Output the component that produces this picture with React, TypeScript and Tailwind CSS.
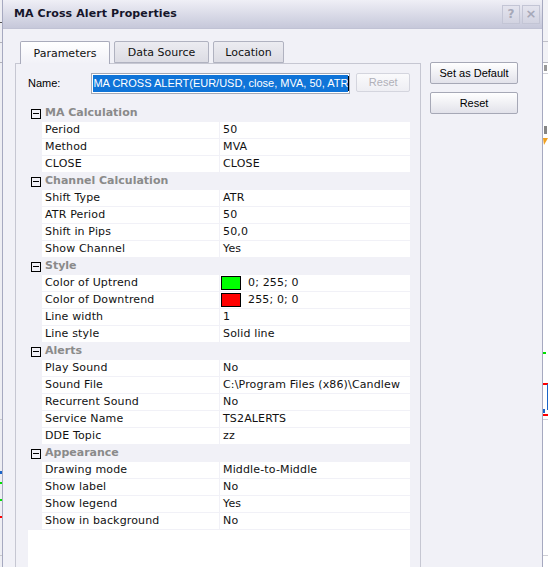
import React from 'react';

type Row = { label: string; value: string; swatch?: string };
type Group = { title: string; rows: Row[] };

const groups: Group[] = [
  {
    title: 'MA Calculation',
    rows: [
      { label: 'Period', value: '50' },
      { label: 'Method', value: 'MVA' },
      { label: 'CLOSE', value: 'CLOSE' },
    ],
  },
  {
    title: 'Channel Calculation',
    rows: [
      { label: 'Shift Type', value: 'ATR' },
      { label: 'ATR Period', value: '50' },
      { label: 'Shift in Pips', value: '50,0' },
      { label: 'Show Channel', value: 'Yes' },
    ],
  },
  {
    title: 'Style',
    rows: [
      { label: 'Color of Uptrend', value: '0; 255; 0', swatch: 'bg-[#00ff00]' },
      { label: 'Color of Downtrend', value: '255; 0; 0', swatch: 'bg-[#ff0000]' },
      { label: 'Line width', value: '1' },
      { label: 'Line style', value: 'Solid line' },
    ],
  },
  {
    title: 'Alerts',
    rows: [
      { label: 'Play Sound', value: 'No' },
      { label: 'Sound File', value: 'C:\\Program Files (x86)\\Candlew' },
      { label: 'Recurrent Sound', value: 'No' },
      { label: 'Service Name', value: 'TS2ALERTS' },
      { label: 'DDE Topic', value: 'zz' },
    ],
  },
  {
    title: 'Appearance',
    rows: [
      { label: 'Drawing mode', value: 'Middle-to-Middle' },
      { label: 'Show label', value: 'No' },
      { label: 'Show legend', value: 'Yes' },
      { label: 'Show in background', value: 'No' },
    ],
  },
];

const verdana = "font-['DejaVu_Sans',Verdana,sans-serif]";
const sans = "font-['Liberation_Sans',Arial,sans-serif]";

const CategoryRow = ({ title }: { title: string }) => (
  <div className="flex h-[17px] items-center">
    <div className="ml-[3px] flex h-[10px] w-[10px] items-center justify-center border border-black">
      <div className="h-px w-[6px] bg-black" />
    </div>
    <span className={`${verdana} ml-[4px] text-[11px] font-bold text-[#8a8a8a]`}>{title}</span>
  </div>
);

const PropRow = ({ row }: { row: Row }) => (
  <div className="flex h-[17px] pb-px">
    <div className="w-[14px]" />
    <div className={`${verdana} w-[177px] bg-white pl-[3px] text-[11px] leading-[16px] tracking-[0.15px] text-[#111]`}>
      {row.label}
    </div>
    <div className="w-px" />
    <div
      className={`${verdana} flex flex-1 items-center overflow-hidden whitespace-nowrap bg-white pl-[1px] text-[11px] leading-[16px] tracking-[0.15px] text-[#111]`}
    >
      {row.swatch ? (
        <>
          <span className={`h-[14px] w-[20px] border border-black ${row.swatch}`} />
          <span className="ml-[7px]">{row.value}</span>
        </>
      ) : (
        <span className="pl-[2px]">{row.value}</span>
      )}
    </div>
  </div>
);

const LeftStrip = () => (
  <svg width="2" height="567" className="block shrink-0 bg-[#eeeef3]">
    <rect x="0" y="22" width="2" height="1" fill="#555" />
    <rect x="0" y="42" width="2" height="1" fill="#b0b0b8" />
    <rect x="0" y="62" width="2" height="1" fill="#b0b0b8" />
    <rect x="0" y="419" width="2" height="1" fill="#c8c8cc" />
    <rect x="0" y="471" width="2" height="3" fill="#1a64c8" />
    <rect x="0" y="482" width="2" height="2" fill="#00e000" />
    <rect x="0" y="499" width="2" height="2" fill="#00e000" />
    <rect x="0" y="516" width="2" height="2" fill="#ff0000" />
    <rect x="0" y="555" width="2" height="1" fill="#c8c8cc" />
  </svg>
);

const RightStrip = () => (
  <svg width="5" height="567" className="block shrink-0 bg-white">
    <rect x="0" y="0" width="5" height="62" fill="#f2f2f6" />
    <rect x="0" y="41" width="5" height="1" fill="#c0c0c8" />
    <rect x="0" y="62" width="5" height="1" fill="#b8b8c0" />
    <rect x="1" y="65" width="3" height="6" fill="#555" opacity="0.6" />
    <rect x="0" y="73" width="5" height="1" fill="#d0d0d6" />
    <rect x="1" y="126" width="3" height="8" fill="#333" opacity="0.6" />
    <polygon points="0,138 5,138 1,145" fill="#f0a020" />
    <rect x="0" y="352" width="3" height="2" fill="#00e000" />
    <rect x="0" y="383" width="5" height="2" fill="#ff0000" />
    <rect x="4" y="384" width="1" height="26" fill="#1a64c8" />
    <rect x="0" y="409" width="2" height="4" fill="#1a64c8" />
    <rect x="0" y="414" width="5" height="2" fill="#ff0000" />
    <rect x="0" y="419" width="5" height="1" fill="#d0d0d6" />
    <rect x="0" y="555" width="5" height="1" fill="#d0d0d6" />
  </svg>
);

export default function App() {
  return (
    <div className="flex h-[567px] w-[548px] overflow-hidden bg-white">
      <LeftStrip />
      <div className="flex w-[541px] shrink-0 flex-col border-x border-[#a6a9c0] bg-[#f1f1f7]">
        {/* title bar */}
        <div className="flex h-[29px] shrink-0 items-center border-b border-[#c0c2d4] bg-gradient-to-b from-[#efeff6] to-[#c6c8da] pl-[11px] pr-[2px]">
          <span className={`${verdana} flex-1 text-[11px] font-bold tracking-[0.1px] text-[#15152a]`}>
            MA Cross Alert Properties
          </span>
          <div className="flex gap-[2px]">
            <div className={`${verdana} flex h-[19px] w-[18px] items-center justify-center border border-[#c3c5d5] bg-gradient-to-b from-[#e4e4ee] to-[#d2d3e1] text-[12px] font-bold text-[#a6a8b8]`}>
              ?
            </div>
            <div className={`${verdana} flex h-[19px] w-[18px] items-center justify-center border border-[#c3c5d5] bg-gradient-to-b from-[#e4e4ee] to-[#d2d3e1] text-[13px] font-bold text-[#a6a8b8]`}>
              ×
            </div>
          </div>
        </div>

        {/* body */}
        <div className="flex min-h-0 flex-1 pl-[12px]">
          <div className="flex w-[406px] flex-col pt-[12px]">
            {/* tabs */}
            <div className={`${verdana} relative z-10 flex h-[22px] gap-[4px] pl-[5px] text-[11px] text-[#111]`}>
              <div className="flex h-[23px] w-[90px] items-center justify-center rounded-t-[2px] border border-b-0 border-[#a9abbb] bg-gradient-to-b from-white to-[#f1f1f7] pt-[2px]">
                Parameters
              </div>
              <div className="flex h-[22px] w-[95px] items-center justify-center rounded-t-[2px] border border-[#b0b2c0] bg-gradient-to-b from-[#ececf1] to-[#dcdce4] pt-[2px]">
                Data Source
              </div>
              <div className="flex h-[22px] w-[71px] items-center justify-center rounded-t-[2px] border border-[#b0b2c0] bg-gradient-to-b from-[#ececf1] to-[#dcdce4] pt-[2px]">
                Location
              </div>
            </div>

            {/* panel */}
            <div className="flex min-h-0 flex-1 flex-col border-x border-t border-[#c6c7d2] pl-[12px] pr-[10px] pt-[9px]">
              <div className="flex h-[21px] items-start">
                <span className={`${sans} w-[64px] pt-[3px] text-[11px] leading-[14px] text-black`}>Name:</span>
                <div className="flex h-[21px] w-[259px] items-center border border-[#a5a9b5] bg-white pl-px">
                  <div className={`${sans} flex h-[17px] w-[255px] items-center overflow-hidden whitespace-nowrap bg-[#0f74d8] text-[11px] tracking-[0px] text-white`}>
                    MA CROSS ALERT(EUR/USD, close, MVA, 50, ATR
                  </div>
                  <div className="h-[15px] w-px bg-black" />
                </div>
                <div className={`${sans} ml-[6px] flex h-[19px] w-[54px] items-center justify-center rounded-[2px] border border-[#d4d5de] bg-gradient-to-b from-[#fafafc] to-[#eeeef3] text-[11px] text-[#b0b0b8]`}>
                  Reset
                </div>
              </div>

              {/* property grid */}
              <div className="mt-[11px] flex min-h-0 flex-1 flex-col">
                {groups.map((g) => (
                  <div key={g.title}>
                    <CategoryRow title={g.title} />
                    {g.rows.map((r) => (
                      <PropRow key={r.label} row={r} />
                    ))}
                  </div>
                ))}
                <div className="flex-1 bg-white" />
              </div>
            </div>
          </div>

          {/* right buttons */}
          <div className="ml-[9px] flex w-[88px] flex-col gap-[8px] pt-[33px]">
            <div className={`${sans} flex h-[22px] items-center justify-center rounded-[2px] border border-[#a6a8b6] bg-gradient-to-b from-white to-[#e2e2ea] text-[11px] text-black`}>
              Set as Default
            </div>
            <div className={`${sans} flex h-[22px] items-center justify-center rounded-[2px] border border-[#a6a8b6] bg-gradient-to-b from-white to-[#e2e2ea] text-[11px] text-black`}>
              Reset
            </div>
          </div>
        </div>
      </div>
      <RightStrip />
    </div>
  );
}
